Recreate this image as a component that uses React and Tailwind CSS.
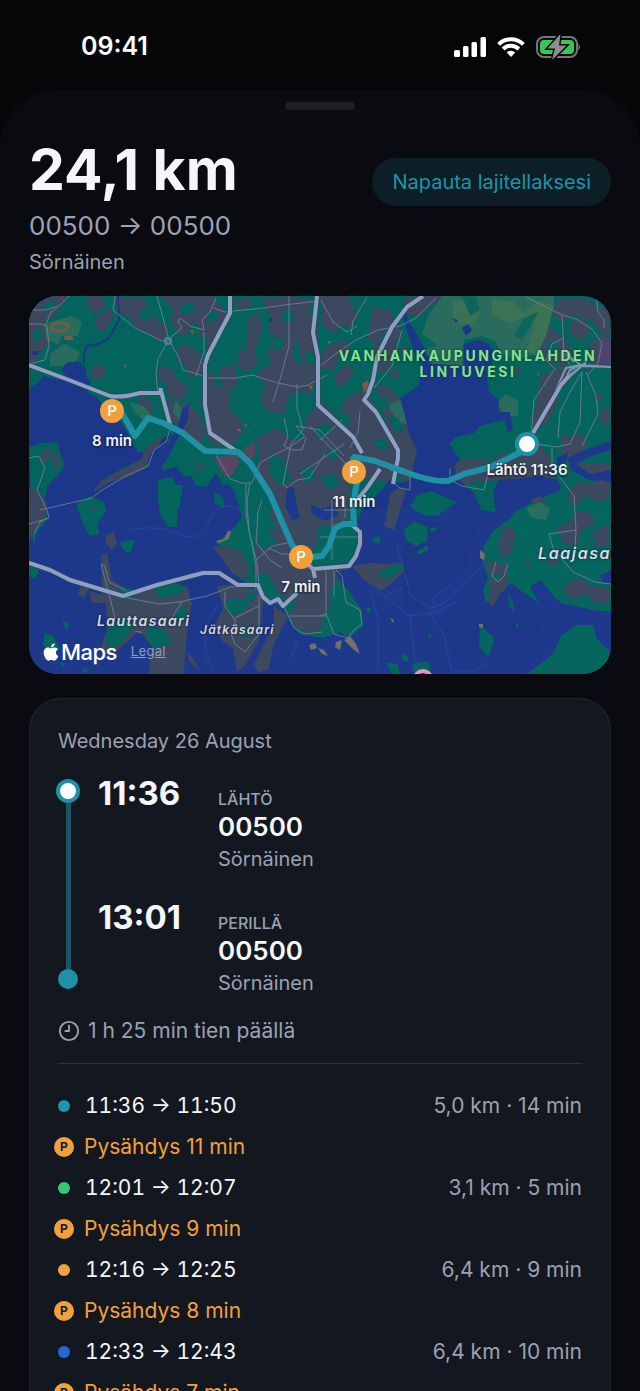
import {Fragment} from "react";
import {FaApple} from "react-icons/fa";
import {Clock9} from "lucide-react";

// The map artwork is drawn in this coordinate box, labels and pins use it too
const MAP = {x: 29, y: 296, width: 582, height: 378};

const place = (x, y) => ({
    left: `${((x - MAP.x) / MAP.width) * 100}%`,
    top: `${((y - MAP.y) / MAP.height) * 100}%`,
});

const legs = [
    {from: "11:36", to: "11:50", distance: "5,0 km", duration: "14 min", dot: "bg-[#1f93a8]", stop: "11 min"},
    {from: "12:01", to: "12:07", distance: "3,1 km", duration: "5 min", dot: "bg-[#2fc978]", stop: "9 min"},
    {from: "12:16", to: "12:25", distance: "6,4 km", duration: "9 min", dot: "bg-[#f2a03d]", stop: "8 min"},
    {from: "12:33", to: "12:43", distance: "6,4 km", duration: "10 min", dot: "bg-[#2866d2]", stop: "7 min"},
];

const parkings = [
    {x: 112, y: 411, label: "8 min"},
    {x: 354, y: 472, label: "11 min"},
    {x: 301, y: 557, label: "7 min"},
];

const builtUp = [
    "M29 296H70L62 304 56 316 46 320 50 330 47 346 40 352 36 362 29 364Z",
    "M88 296l14 0 4 10-10 8-8-6z",
    "M114 297L142 297 152 316 170 330 160 342 150 334 138 330 128 316 118 312Z",
    "M98 316l12-8 4 6-6 14-8 4-6-8z",
    "M160 296H212L226 312 222 330 210 350 206 346 208 334 198 340 200 328 192 322 186 336 176 332 170 318 174 310Z",
    "M178 345l14 2 8 6 4 14-6 10-10-2-2-10-8-4z",
    "M92 368l8-4 6 4-2 8-8 4-6-4z",
    "M160 366l12 2 6 12 8 4 2 10-10 6-10-4-2-12-8-6z",
    "M204 378l8-8 4 18 8-4 6 12 0 14 10 8 2 14-8 12-10-4-10 6-10-14 2-16-6-14z",
    "M220 370l12-6 6 14-4 14-8-4-6-8z",
    "M168 400l22 4 12 14 2 30-16-8-10-14-12-8z",
    "M140 394l10 6 4 12-10 0-6-8z",
    "M262 298l28-2 24 4-8 14 4 16-14 10-4 16 12 14 0 20-14 4-6 20-16-2-8-12 6-14-10-12 14-10-2-12 6-14-6-8 2-14z",
    "M250 318l8-6 4 12-4 20-8 12-4-14z",
    "M234 300l14-2 6 6-14 8z",
    "M240 350l14 0 4 14-10 8-12-6z",
    "M298 314h20v60l-8 20-12-6-4-16 8-10-4-20z",
    "M320 296h28l10 20-8 12-10-4-4 10-14-8z",
    "M322 352l10-8 14-4 4 10-10 6-6 14-12-2z",
    "M334 374l14-10 6 6-8 14-10 2z",
    "M344 400l16-10 10 6 12 24 12 14 4 34-10 14-30-6-34-22 6-10z",
    "M256 438l20-10 16 12 22-4 14 8 20-4 12 8 0 24-10 4-2 44-26 10-8 20-10 14-10-2-12-18-16-40-14-26 8-20z",
    "M256 540l14-10 20-4 6 20 8 20 20 4 22-2 0 20-18 22-30 0-20-18-10-18-14 0z",
    "M282 590l20-6 20 4 4 22-6 20-14 4-14-10z",
    "M320 400l30 30 6 30-30 6-24-22 4-26z",
    "M372 308l18 2 4 12-10 10-6 14-10-8z",
    "M374 346l20-6 4 10-10 20-14 2z",
    "M384 334l14-8 4 8-10 10z",
    "M404 298l16-2h28l-20 12-8 8-14-2z",
    "M376 384l14 4 20 22 10 24-4 44-14 4-10-34z",
    "M446 458l36 2 34-10 12-8 12 2 14 20 2 14-60 2-34 6-16-12z",
    "M536 330l14-4 14 14 10 12-8 14-14-2-14-10-2-12z",
    "M542 376l20-10 12 4-14 30-14 24-14 6 4-30z",
    "M558 300l26-2 26 14v20l-10 2-8-14-20-4-12 6-8-10z",
    "M570 322l14-4 6 12-6 10-12-4z",
    "M590 342l20-10v38l-12-4-10 4z",
    "M562 436l20-2 6 10-8 12-18 2z",
    "M574 464h36v10h-30z",
    "M598 412l12-6v18l-8 2z",
];

const parks = [
    "M50 354l14-10 16 8-4 10-12 4-14 0z",
    "M44 324l28-8 10 6-4 14-16 0-4 8-12-4z",
    "M428 316l14-20h112l0 10-14 24-6 24-16 6-18-6-4-12-14-6-18 4-4 18-16-2-8-12-14-10z",
    "M424 350l18-6 16 4 8 10-6 16-22-2z",
    "M388 406l10-6 8 4 0 12 6 10-14-4z",
    "M496 404l10-10 12 6 0 16-12 0z",
    "M130 402l14 4 10 12-8 4-12-10z",
    "M176 400l6 10-2 12-7-10z",
];

const water = [
    "M29 388L38 383 44 376 58 380 66 375 61 370 66 363 77 361 85 367 87 378 91 382 87 392 96 397 106 407 120 420 128 434 138 452 150 452 160 440 172 433 168 442 163 457 162 470 176 467 184 476 192 477 196 486 206 487 211 480 216 473 222 484 229 485 236 493 242 517 234 528 216 543 229 553 242 563 236 576 256 590 268 602 282 606 290 622 300 634 322 638 340 632 348 638 363 627 362 610 354 600 344 590 336 573 352 567 358 552 360 530 357 522 362 510 375 497 384 488 390 478 396 484 411 480 414 463 417 450 409 434 404 412 400 398 410 392 419 385 422 363 463 366 464 344 478 340 489 344 496 357 486 370 489 392 499 400 498 412 510 412 513 430 508 432 505 420 495 422 480 426 474 433 456 437 449 444 460 459 454 467 458 480 474 493 481 510 496 512 493 493 498 480 524 478 541 476 558 480 561 490 544 497 531 503 518 510 508 520 494 530 483 547 483 563 488 577 483 590 486 603 498 590 511 583 524 593 539 603 530 586 541 580 554 597 561 603 594 610 611 612V674H29Z",
    "M403 300l5 20 8 12 8 16 6 14-10 2-8-19-8-23z",
    "M189 404l-1 16-10 18-12 24-6 2 6-16 12-22 4-16z",
    "M568 458l22-10 21-7v9l-20 6-15 8 14 10 21-4v14l-22-4-18-10z",
    "M288 486l6 2 2 14 4 16-8 2-7-14z",
    "M311 505l10 4 12-4 6 10-14 6-14-8z",
    "M452 318l6 2-2 3zM462 328l6-4 4 6-6 6z",
    "M32 351h6v4h-6zM269 318h3v4h-3z",
    "M600 576l11-6v14l-9-2z",
    "M556 458l12-6-2 10-8 4z",
];

const greenIslands = [
    "M158 480l14-3 4 8 7 0-3 20-3 6 0 16-9 0-8-13-2-16z",
    "M76 504l14-8 14 6 2 10-9 12 2 10-9 2-8-14z",
    "M29 447l12-4 16-1 4 14 4 10-8 10-9 9-4 16 4 18-10 12-5 14z",
    "M214 492l8 4 3 8-2 4-8-5z",
    "M120 542l14-2-2 10-4 4-6-6z",
    "M410 507l7-12 14-4 26 11-20 14-14-1z",
    "M404 530l10-9 14 6-1 14-11 5-10-6z",
    "M430 528l8-1-2 4-6 1zM417 552l10-7 2 4-10 6z",
    "M372 538l8-2 0 8-6-2z",
    "M366 608l6 0-4 6zM428 633l4 2-2 4z",
    "M480 626l13 10 1 6-6 16-9-12z",
    "M386 662l12 2 2 10h-8z",
    "M412 664l16-3 4 13h-18zM402 654l6 2 0 6-6-2z",
    "M527 674l26-20 8-18 16-11 16 0 4 14 14 14v21z",
    "M44 632l8 4 2 10-10-4zM62 620l8 4-4 6zM29 562l10 8-4 10-6-4z",
    "M42 642l10-8 8 14-6 8-8-4z",
    "M508 594l5 8 1 10-5-6zM516 622l3 3-3 3z",
    "M82 668l6 2-4 4zM60 662l6 2-4 4z",
];

const greyIslands = [
    "M352 566l18-3 20 1 13-2 2 8-12 12-12 9-18-12z",
    "M390 494l8-6 8 2-6 20-6 20-10-4 4-20z",
    "M94 490l8-10 22-12 16-8 8-14 14-10-2 8-10 10-4 14-16 8-20 6-16 10z",
    "M106 534l8-2 3 12-6 6-5-8z",
    "M101 555l6-2 5 27 17 10 20 1 8-4 18-4 12 4 5 16-3 14-3 26-2 31h-35l3-27-13-17-13 13-17 14-8-10 6-17-1-27-14 0-2-12 12 4z",
    "M217 586l22-2 22 8 2 12-4 36-14 26-8 6-4-24-10-6-8-16 8-18z",
    "M274 606l14 10-14 28-6 26-10 2-4-8 10-20 10-20z",
    "M213 547l14-1 14 6 8 14-2 14-14-6-12-16z",
    "M82 582l8 4-6 12-6-4zM188 652l8 10 2 8-10-10z",
    "M29 488l10 2 8 14-2 16-8 8-8 14z",
    "M52 456l6-4 2 14-6 4z",
];

const greenPatches = [
    "M116 590l14-2 8 6-8 6-12-2z",
    "M152 586l18-4 14 4-4 8-20 4z",
    "M176 610l10-4 0 14-8 2z",
    "M110 622l16-4 8 8-12 16-12 10-4-12z",
    "M148 626l18 4 6 14-18 4-8-10z",
    "M222 602l14-4 16 2-8 10-12 6z",
    "M338 578l12 14 6 12-12 8-14-8 0-14z",
    "M336 614l18-8 8 14-4 8-10 8-12-8z",
    "M378 574l8-6 16-4 2 4-12 10-10 0z",
    "M235 468l12 2 4 18 0 18-10 6-6-18z",
    "M254 480l12 6 6 12-2 16-14 4-6-18z",
    "M244 520l10 2 4 12-10 8-8-6z",
    "M258 536l10-4 8 8-6 8-12 0z",
    "M320 476l14-2 6 10-12 6z",
    "M316 528l12-4 2 14-10 8z",
    "M270 454l14 6 8 20-12 6-10-12z",
    "M300 470l10-4 6 10-10 8z",
    "M288 400l8-2 2 12 6 10-10 8-12-8z",
    "M272 340l8-4 4 10-10 6z",
    "M282 312l10-4 2 12-10 4z",
    "M306 352l8 0 2 12-10 0z",
    "M314 430l10-6 10 4-8 10-8 0z",
    "M336 420l8-8 8 6-6 8z",
    "M376 396l10 2 4 10-10 0z",
    "M388 416l10 2 6 14-10 0z",
    "M374 440l10-2 4 10-10 2z",
    "M330 448l8 4-2 8-10-4z",
    "M180 306l12-4 4 8-14 6z",
    "M208 312l10 0 0 8-10 2z",
    "M138 312l8-4 6 8-8 6z",
    "M44 304l10-4 2 6-10 6zM33 330l8-2 0 10-8 4z",
    "M548 340l10 2 0 10-10-2z",
    "M556 392l10-8 4 10-12 10z",
    "M484 462l10-4 4 8-12 2zM508 452l10-4 2 8-10 2zM470 482l10-2 4 8-8 2z",
    "M248 592l8 2-2 8-8-4zM240 628l8-2 0 10-6 2z",
    "M286 596l10 6-4 10-8-4z",
];

const greyPatches = [
    "M502 530l10-4 4 10-6 18-8 4-4-10z",
    "M490 580l10 0 2-10 6 2 0 14-8 8-8 14-4-8z",
    "M486 560l10 4 12 0-2 8-14 4-4-6z",
    "M570 490l10-8 12 2 8-4 10 2v16l-10 4-14-6-10 10-8-4z",
    "M556 528l14-6 8-12 14 4 2 10-12 6-6 16-10 0z",
    "M592 532l18-8v20l-14 4z",
    "M566 584l14-6 12 8 18 2v16l-14 0-10-10-12 6-10-8z",
    "M530 500l10-4 6 8-8 4zM476 470l10-2 0 6-8 2z",
    "M546 560l8-2 4 6-8 2zM524 560l6 2-2 6z",
    "M44 450l6-2 2 8-8 6-6-2zM90 506l6 2-4 4z",
    "M215 440l8-4 4 8-8 4zM194 462l10 2 0 6-8-2z",
    "M246 322l4-6 4 4-4 6zM400 350l6-6 2 8-6 4zM390 372l8-4 2 8-8 4z",
    "M510 370l8-4 4 6-8 4zM594 396l6-4 4 6-8 4z",
];

const specks = [
    "M344 640l6-4 6 8 4 10-6-4zM318 648l6 2 4 6-6-2zM336 642l6-2-2 10-5-3z",
    "M216 541l8-2 4-8 3 0-2 8-10 4zM309 645l6-2 2 5-6 2z",
    "M480 550l5 4-1 6-4-2zM134 631l6 0 2 3zM390 618l4 2-1 3zM479 624l4 0 0 4-4-1z",
];

const minorRoads = [
    "M29 310h16l14-4 10-10M29 324h12l6 2 2 20-4 14-16 4M46 324l5-12 6-4",
    "M115 296l-2 14 22 18 27 13 6 0-10 18-2 14 2 22",
    "M157 296l12 44 10 18 4 12 15 4 8 4 30 0 16-3 26 8 20 4 10-2 19-10",
    "M170 338l12-10-4-6 2-4 10 8 14 4M204 330l-2-10 8-8 6-14M204 332l0 20-8 24",
    "M214 308l10 4 40-4 20-3 34-4",
    "M289 296l0 50-8 30-8 26M297 384l0 24 6 22-12 14M284 418l4 18-4 10 8 4 10 0 4-12-10-12",
    "M216 455l14 24 12 4 10 0 8-20 14-8 16-8 14-10",
    "M250 482l-3 20 2 30 8 30 2 22M291 444l-8 40 4 4 10-8 12-2 16-24",
    "M170 430l-4 12-12 8-6 16-22 10-24 14-10 8-52 12M29 458l10-2 6 12-8 22 10 20 2 8-20 6M34 534l6-12 8-4",
    "M321 300l12 22 14 10 10-6M367 297l-14 24-2 14M320 366l18-14 18-12 22-10 22-4 16-8 20-20M402 330l-10 36-18 22M360 412l-2 20-8 16",
    "M296 426l24 4 24 26M310 426l36 38M320 440l22-20M300 474l44-30M390 470l20 6 0 14-10-2-8-6 4-12",
    "M526 297l36 18 14 4 16 10 10 14-4 20-10 12M562 315l2 40 6 10M564 338l-12 6-6 16 10 10M554 370l-20 30-3 36M536 444l20 3 14-3 10-22 2-50M582 372l-12 20-10 20-2 26M586 372l10 24 2 18-8 16-8 16M596 296l2 16 6 8 0 8",
    "M450 468l0 12 12 6 22 4 4-16M552 448l0 20 10 12 12 16 2 34-1 20M576 530l-27 4 4 14 20 24 22 10 16 2M496 562l-4 14 6 6 6-6 4-12",
    "M246 484l0 30 10 52 0 24M262 500l-4 12-2 30 14 18 12 8M256 560l16-14 20-4M268 548l14 6 20 0",
    "M332 500v60M345 498v20M324 510h30M320 537h38M326 570v44l-6 2M334 570v26M326 614l8 20 14 4 6-8 8-6-2-14-14-8-4-26-6-6M284 606l10 22 10 6 18-2M290 616h36",
    "M123 597l36 7 20-2 28-6 24-9 30-2M101 564l8 30 6 24M101 564l4 2 4 16 16 8 6 6M182 602l-10 16M225 592l0 14 10 14 0 14M235 618l24-12M259 590v44l-14 18-10-8-4-10",
];

const ferryLines = "M130 530q30-6 50 4t30-14 40-6M397 546l14 50 20 12 12-4 28-28 14-12M376 590l34 26 26-4 20-10M410 616l2 20 4 36M430 612l14 24 8 36 20 0 14-8M370 590l8 30 0 50M384 596l20-8M436 612l-4-14 20-14M204 650q2-40 20-48t24 2M205 652l8 18M290 660l8-20";

const motorways = [
    "M29 365l40 15 41 16q12 2 30-3h20l1-5M161 391l9 33",
    "M230 296v17l-22 42-3 10v40l5 28 26 18",
    "M317 296l-4 37 5 24v48l35 32 9 16",
    "M423 296l-16 11-15 20-15 30-4 23-5 14-4 6 12 12 22 38 0 8-5 26M380 469l-13 19-10 12",
    "M533 433l28-48 8-9",
    "M29 563l21 7 20 10 53 16 34-11 46-12h16l19 12h20l5 12 7 6 8-4 5 7 14-13M303 560l10 9 36-3 7-10 4-12v-12l-7-6M313 569l2 9",
];

// The interchange east of the start point
const ramps = "M562 384l8-14 10-5 31 2M568 376l14-10 29 1M556 390l10-22 20-4M574 362l-8-8 16 12M566 380l20-18";

const route = "M112 411l11 4 12 21 13-18 15 5 20 10 22 18 33 1 12 11 20 31 22 51 11 13 19-2 7-10 6-18 9-4h10l-1-16 2-16 6-26-9-3 2-6 21 4 33 12q24 9 40 8l16-7 27-7 24-12 20-10";

const StatusBar = () => (
    <div className="flex h-[90px] items-center justify-between pt-1 pr-[59px] pl-[81px]">
        <span className="text-[25px] font-semibold text-white">09:41</span>
        <div className="flex items-center gap-[11px]">
            <svg viewBox="0 0 32 20" className="h-5 w-8 fill-white">
                <rect x="0" y="13" width="6" height="7" rx="1.5"/>
                <rect x="9" y="9" width="5.500" height="11" rx="1.500"/>
                <rect x="17.500" y="5" width="5.500" height="15" rx="1.500"/>
                <rect x="26.500" y="0" width="5.500" height="20" rx="1.500"/>
            </svg>
            <svg viewBox="0 0 28 20" className="h-5 w-7 fill-none stroke-white" strokeWidth="4">
                <path d="M1.6 7.4a17.5 17.5 0 0 1 24.8 0"/>
                <path d="M6.2 12a11 11 0 0 1 15.6 0"/>
                <path d="M9.8 15.5a6 6 0 0 1 8.4 0L14 20z" className="fill-white" stroke="none"/>
            </svg>
            <svg viewBox="0 0 45 24" className="h-6 w-[45px]">
                <rect x="1" y="2" width="40" height="20" rx="7" fill="none" stroke="#747678" strokeWidth="2"/>
                <rect x="4" y="5" width="34" height="14" rx="4" fill="#34c759"/>
                <path d="M42.5 8.500q3 3.500 0 7z" fill="#747678"/>
                <path
                    d="M24.500 -1L11.500 13.500h7.500L16 25 30.500 10.500h-7.500z"
                    fill="#8c8d90"
                    stroke="#050608"
                    strokeWidth="3"
                    paintOrder="stroke"
                />
            </svg>
        </div>
    </div>
);

const MapArt = () => (
    <svg viewBox="29 296 582 378" className="block w-full">
        <rect x="29" y="296" width="582" height="378" fill="#05655f"/>
        <g fill="#3d4960">{builtUp.map((d) => <path key={d} d={d}/>)}</g>
        <g fill="#2b6d5f">{parks.map((d) => <path key={d} d={d}/>)}</g>
        <path d="M452 302l20-4 10 14-12 14-16-4zM492 298l22 4 12 12-14 10-20-8zM540 300l14 6-8 30-10 20-10-6 8-22-14-12z" fill="#3d7256"/>
        <path d="M462 296l14 0 4 14-10 6zM524 318l14-6-6 12-10 16-8-4z" fill="#0f665c"/>
        <path d="M214 458l22-4 4 8-8 14-8 0zM240 452l14-10 2 10-8 12z" fill="#5a4862"/>
        <path d="M598 346l13-6v24l-10-2z" fill="#4f4275"/>
        <ellipse cx="60" cy="327" rx="9" ry="4" fill="none" stroke="#6f5f43" strokeWidth="3"/>
        <path d="M64 336h8l2 4h-9zM124 364l3 1-2 4zM190 330l3 0 0 5zM236 430l4-2 1 4zM244 424l4 1-2 3zM308 386l5-1-1 5zM537 373l3 1-2 3zM327 341l4 0-2 4zM362 384l6-4 2 10-6 2z" fill="#85593f"/>
        <g fill="#1e388b">{water.map((d) => <path key={d} d={d}/>)}</g>
        <path d="M118 296l1 24-10 18-10 6-12 2-3 8v10" fill="none" stroke="#1e388b" strokeWidth="2"/>
        <path d="M420 520l56 6-10 40-30 30-30 20-6-60z" fill="#1c3480" opacity=".4"/>
        <path d="M434 625l40-15 70 10-20 36h-70z" fill="#1c3480" opacity=".3"/>
        <g fill="#05655f">{greenIslands.map((d) => <path key={d} d={d}/>)}</g>
        <g fill="#3d4960">{greyIslands.map((d) => <path key={d} d={d}/>)}</g>
        <g fill="#05655f">{greenPatches.map((d) => <path key={d} d={d}/>)}</g>
        <g fill="#3d4960">{greyPatches.map((d) => <path key={d} d={d}/>)}</g>
        <path d="M526 508l14-6 10 6-4 12-14-2z" fill="#2b6d5f"/>
        <g fill="#717365">{specks.map((d) => <path key={d} d={d}/>)}</g>
        <path d={ferryLines} fill="none" stroke="#2748a6" strokeWidth="1"/>
        <g fill="none" stroke="#72829b" strokeWidth="1" strokeLinejoin="round" opacity=".85">
            {minorRoads.map((d) => <path key={d} d={d}/>)}
            <circle cx="168" cy="341" r="3" strokeWidth="2"/>
        </g>
        <path d={ramps} fill="none" stroke="#8394b2" strokeWidth="2"/>
        <g fill="none" stroke="#34435f" strokeWidth="6" strokeLinejoin="round" opacity=".6">
            {motorways.map((d) => <path key={d} d={d}/>)}
        </g>
        <g fill="none" stroke="#8e9fc4" strokeWidth="4" strokeLinejoin="round">
            {motorways.map((d) => <path key={d} d={d}/>)}
        </g>
        <path d={route} fill="none" stroke="#1f90a6" strokeWidth="6" strokeLinejoin="round"/>
        <circle cx="423" cy="679" r="10" fill="#f08cc8"/>
        <circle cx="423" cy="677" r="4" fill="#2c2440"/>
    </svg>
);

const PinLabel = ({x, y, children}) => (
    <span
        className="absolute -translate-x-1/2 -translate-y-1/2 text-[15px] font-semibold whitespace-nowrap text-[#f0f2f8] [text-shadow:0_1px_3px_#0b1020]"
        style={place(x, y)}
    >
        {children}
    </span>
);

const PlaceLabel = ({x, y, className, children}) => (
    <span
        className={`absolute -translate-y-1/2 font-semibold tracking-widest whitespace-nowrap text-[#d5dae3] italic [text-shadow:0_0_3px_#10182c] ${className}`}
        style={place(x, y)}
    >
        {children}
    </span>
);

const RouteMap = () => (
    <div className="relative mt-5 overflow-hidden rounded-[28px]">
        <MapArt/>
        <p
            className="absolute -translate-x-1/2 -translate-y-1/2 pl-1 text-center text-sm leading-4 font-bold tracking-[0.18em] whitespace-nowrap text-[#86e38f] [text-shadow:0_0_3px_#0b3a34]"
            style={place(466, 364)}
        >
            VANHANKAUPUNGINLAHDEN<br/>LINTUVESI
        </p>
        <PlaceLabel x={97} y={621} className="text-sm">Lauttasaari</PlaceLabel>
        <PlaceLabel x={200} y={630} className="text-xs">Jätkäsaari</PlaceLabel>
        <PlaceLabel x={538} y={553} className="text-base">Laajasalo</PlaceLabel>
        {parkings.map(({x, y, label}) => (
            <Fragment key={label}>
                <span
                    className="absolute flex size-6 -translate-x-1/2 -translate-y-1/2 items-center justify-center rounded-full bg-[#f2a03d] text-[15px] font-medium text-white"
                    style={place(x, y)}
                >
                    P
                </span>
                <PinLabel x={x} y={y + 30}>{label}</PinLabel>
            </Fragment>
        ))}
        <span
            className="absolute size-6 -translate-x-1/2 -translate-y-1/2 rounded-full border-4 border-[#1f90a6] bg-white"
            style={place(527, 444)}
        />
        <PinLabel x={527} y={470}>Lähtö 11:36</PinLabel>
        <div className="absolute bottom-2 left-3 flex items-center text-white">
            <FaApple className="size-5"/>
            <span className="text-[22px] leading-7 font-medium tracking-tight">Maps</span>
            <a href="#legal" className="ml-[14px] text-[13px] tracking-wide text-[#8fa0b8] underline">Legal</a>
        </div>
    </div>
);

const Endpoint = ({time, label}) => (
    <div className="flex">
        <span className="w-[120px] text-[33px] leading-8 font-bold text-[#f5f6fa]">{time}</span>
        <div className="pt-3">
            <p className="text-base leading-5 font-medium text-[#9ca1b0]">{label}</p>
            <p className="text-[26px] leading-9 font-semibold text-[#f5f6fa]">00500</p>
            <p className="text-[20px] leading-7 text-[#9ca1b0]">Sörnäinen</p>
        </div>
    </div>
);

const Leg = ({from, to, distance, duration, dot, stop}) => (
    <>
        <li className="flex h-[41px] items-center gap-[15px]">
            <span className={`size-3 rounded-full ${dot}`}/>
            <span className="text-[21px] text-[#f5f6fa] tabular-nums">{from} → {to}</span>
            <span className="ml-auto text-[21px] text-[#9ca1b0]">{distance} · {duration}</span>
        </li>
        <li className="flex h-[41px] items-center gap-[14px] text-[#f2a03d]">
            <span className="flex w-3 justify-center">
                <span className="flex size-5 flex-none items-center justify-center rounded-full bg-[#f2a03d] text-xs font-bold text-[#141921]">
                    P
                </span>
            </span>
            <span className="text-[21px]">Pysähdys {stop}</span>
        </li>
    </>
);

const TripCard = () => (
    <section className="mt-6 rounded-t-[32px] border border-b-0 border-[#212731] bg-[#131820] px-7 pt-7">
        <h2 className="text-[20px] leading-7 text-[#9ca1b0]">Wednesday 26 August</h2>

        <div className="mt-[22px] flex gap-5">
            <div className="flex w-5 flex-col items-center pt-0.5 pb-2">
                <span className="size-6 flex-none rounded-full border-4 border-[#1f90a6] bg-white"/>
                <span className="w-[5px] flex-1 bg-[#1a5664]"/>
                <span className="size-5 flex-none rounded-full bg-[#1f90a6]"/>
            </div>
            <div className="flex flex-col gap-7">
                <Endpoint time="11:36" label="LÄHTÖ"/>
                <Endpoint time="13:01" label="PERILLÄ"/>
            </div>
        </div>

        <p className="mt-5 flex items-center gap-2 text-[21px] leading-7 text-[#9ca1b0]">
            <Clock9 className="size-[22px]"/>
            1 h 25 min tien päällä
        </p>

        <hr className="mt-[18px] border-[#2a303b]"/>

        <ul className="mt-[21px]">
            {legs.map((leg) => <Leg key={leg.from} {...leg}/>)}
        </ul>
    </section>
);

const App = () => {
    return (
        <div className="h-screen overflow-hidden bg-[#040608] font-['Inter',sans-serif]">
            <StatusBar/>
            <main className="rounded-t-[56px] bg-[#090b10] px-[29px] pt-3">
                <div className="mx-auto h-2 w-[70px] rounded-full bg-[#1e1f24]"/>
                <header className="flex items-start justify-between pt-7">
                    <div>
                        <h1 className="text-[57px] leading-[64px] font-bold text-[#f5f6fa]">24,1 km</h1>
                        <p className="mt-1.5 text-[26px] leading-9 text-[#9da1b3]">00500 → 00500</p>
                        <p className="mt-1 text-[20px] leading-7 text-[#9ca1b0]">Sörnäinen</p>
                    </div>
                    <button
                        type="button"
                        className="mt-5 h-12 rounded-full bg-[#0c1f27] px-5 text-[20px] text-[#1f93a8]"
                    >
                        Napauta lajitellaksesi
                    </button>
                </header>
                <RouteMap/>
                <TripCard/>
            </main>
        </div>
    );
};

export default App;
